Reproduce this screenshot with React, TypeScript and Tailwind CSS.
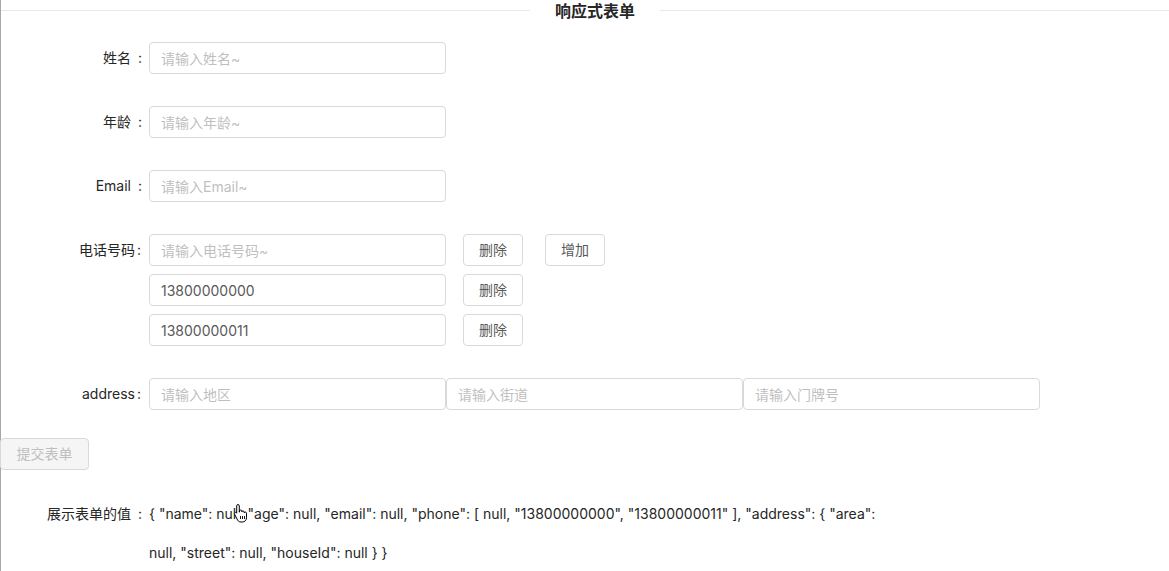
import React from 'react';

const font = { fontFamily: 'Inter, "Noto Sans CJK SC", sans-serif' };

const Input: React.FC<{ placeholder?: string; value?: string; className?: string }> = ({ placeholder, value, className }) => (
  <input
    readOnly
    placeholder={placeholder}
    defaultValue={value}
    className={`h-8 w-[297px] rounded border border-[#d9d9d9] bg-white px-[11px] text-sm text-[#595959] placeholder:text-[#bfbfbf] outline-none ${className ?? ''}`}
    style={font}
  />
);

const Btn: React.FC<{ children: React.ReactNode; className?: string }> = ({ children, className }) => (
  <button
    className={`h-8 w-[60px] rounded border border-[#d9d9d9] bg-white text-sm text-[#595959] ${className ?? ''}`}
    style={font}
  >
    {children}
  </button>
);

// full: the label uses a wide (full-width-looking) colon with more room around it
const Label: React.FC<{ text: string; full?: boolean; className?: string }> = ({ text, full, className }) => (
  <div className={`w-[148px] shrink-0 text-right text-[#262626] ${className ?? 'leading-8'}`}>
    {text}
    {full ? <span className="ml-[7px] mr-[7px]">:</span> : <span className="ml-[2px] mr-[8px]">:</span>}
  </div>
);

const Cursor = () => (
  <svg className="absolute left-[232px] top-[503px]" width="16" height="20" viewBox="0 0 16 20">
    <path
      d="M5 1.5c.8 0 1.3.6 1.3 1.4v6.3l.1-1.1c.1-.7.6-1.1 1.2-1.1.7 0 1.2.5 1.2 1.2v.7c.1-.6.6-1 1.2-1 .7 0 1.2.5 1.2 1.2v.8c.1-.5.6-.9 1.1-.9.7 0 1.2.5 1.2 1.2v4.5c0 2.6-1.8 4.3-4.3 4.3H8c-1.5 0-2.5-.6-3.3-1.7L1.6 11.2c-.4-.6-.3-1.3.3-1.7.5-.3 1.2-.2 1.6.3l.2.3V2.9c0-.8.5-1.4 1.3-1.4z"
      fill="#fff"
      stroke="#000"
      strokeWidth="1"
    />
    <path d="M7.5 13v3M9.5 13v3M11.5 13v3" stroke="#000" strokeWidth="0.9" />
  </svg>
);

export default function App() {
  return (
    <div className="relative min-h-[571px] border-l border-[#a8a8a8] bg-white text-sm" style={font}>
      <div className="flex h-[21px] items-center">
        <div className="h-px w-[529px] bg-[#e8e8e8]" />
        <span className="px-[25px] text-base font-bold text-[#262626]">响应式表单</span>
        <div className="h-px flex-1 bg-[#e8e8e8]" />
      </div>

      <div className="mt-[21px] flex flex-col gap-8">
        <div className="flex">
          <Label text="姓名" full />
          <Input placeholder="请输入姓名~" />
        </div>
        <div className="flex">
          <Label text="年龄" full />
          <Input placeholder="请输入年龄~" />
        </div>
        <div className="flex">
          <Label text="Email" full />
          <Input placeholder="请输入Email~" />
        </div>
        <div className="flex">
          <Label text="电话号码" />
          <div className="flex flex-col gap-2">
            <div className="flex">
              <Input placeholder="请输入电话号码~" />
              <Btn className="ml-[17px]">删除</Btn>
              <Btn className="ml-[22px]">增加</Btn>
            </div>
            <div className="flex">
              <Input value="13800000000" />
              <Btn className="ml-[17px]">删除</Btn>
            </div>
            <div className="flex">
              <Input value="13800000011" />
              <Btn className="ml-[17px]">删除</Btn>
            </div>
          </div>
        </div>
        <div className="flex">
          <Label text="address" />
          <Input placeholder="请输入地区" />
          <Input placeholder="请输入街道" />
          <Input placeholder="请输入门牌号" />
        </div>
      </div>

      <button
        className="-ml-px mt-7 h-8 w-[89px] rounded border border-[#d9d9d9] bg-[#f5f5f5] text-sm text-[#bfbfbf]"
        style={font}
      >
        提交表单
      </button>

      <div className="mt-6 flex leading-[39px] text-[#262626]">
        <Label text="展示表单的值" full className="leading-[39px]" />
        <div className="w-[740px]">
          {'{ "name": null, "age": null, "email": null, "phone": [ null, "13800000000", "13800000011" ], "address": { "area": null, "street": null, "houseId": null } }'}
        </div>
      </div>

      <Cursor />
    </div>
  );
}
